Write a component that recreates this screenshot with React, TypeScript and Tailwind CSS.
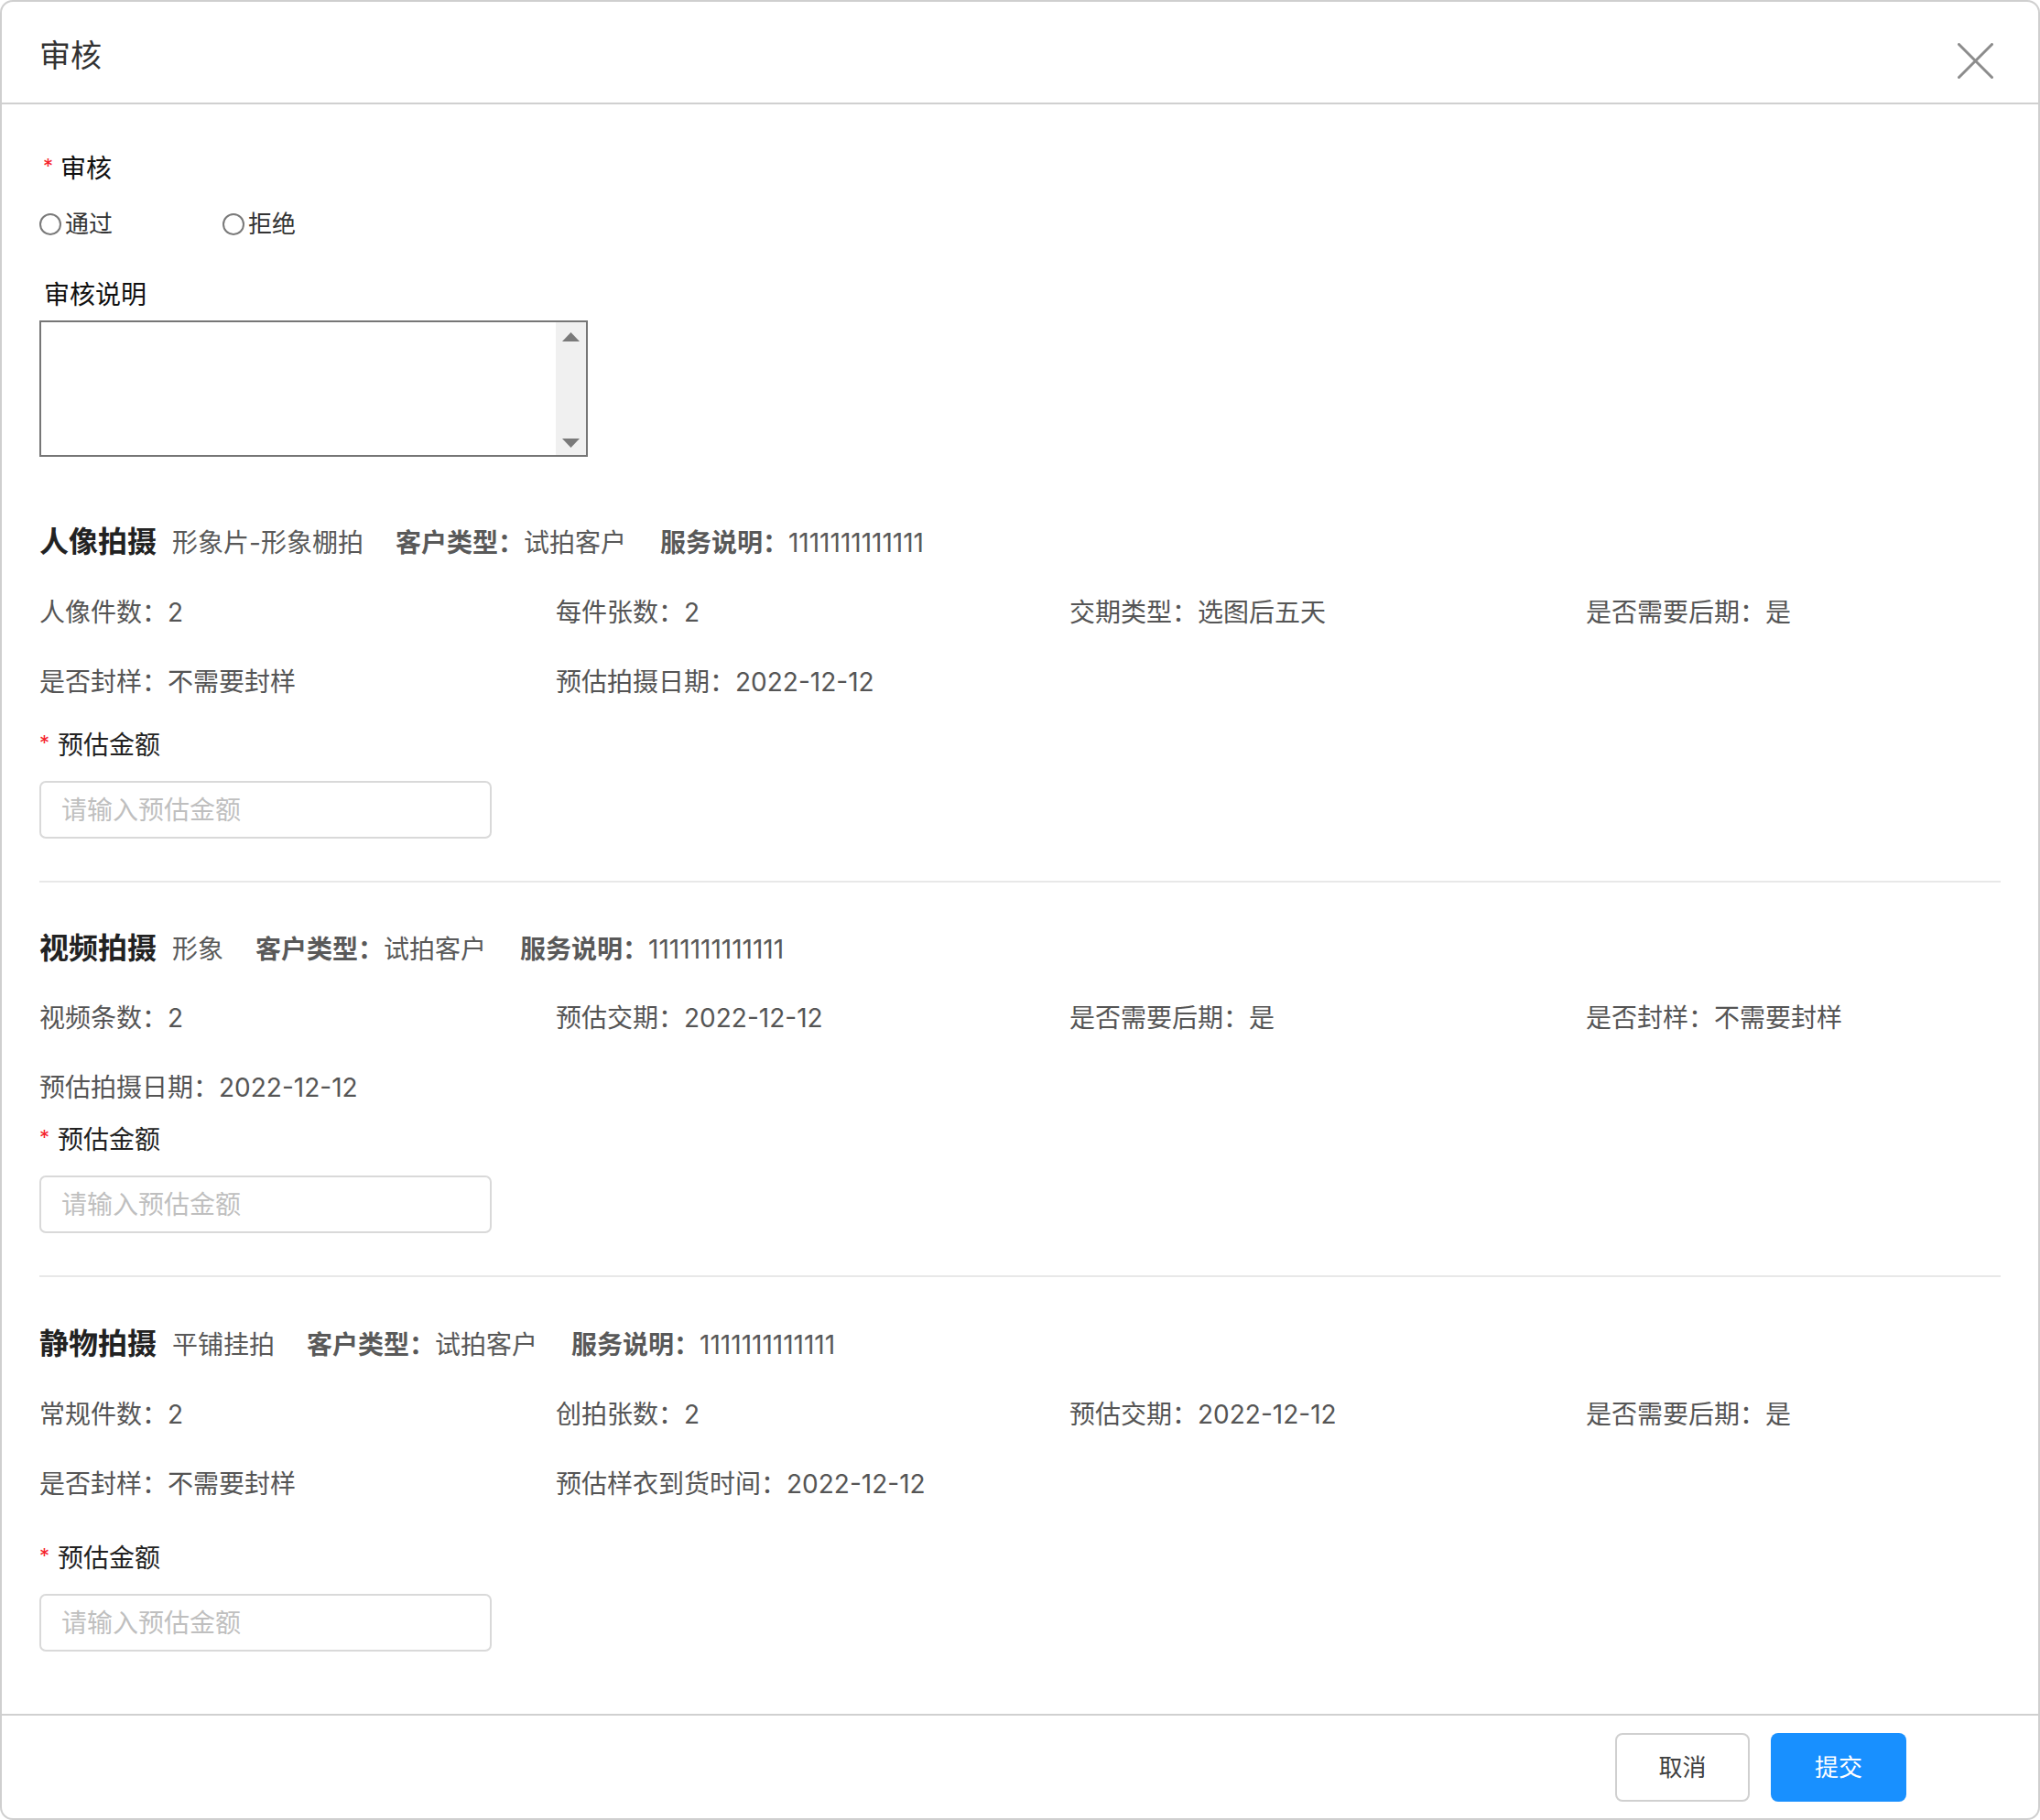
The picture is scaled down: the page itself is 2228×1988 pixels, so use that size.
import React from "react";

type Row = [string, string][];
type Section = {
  title: string;
  sub: string;
  customer: string;
  service: string;
  rows: Row[];
  titleMt: string;
  rowsMt: string;
  labelMt: string;
  inputMt: string;
  divider: boolean;
};

const sections: Section[] = [
  {
    title: "人像拍摄",
    sub: "形象片-形象棚拍",
    customer: "试拍客户",
    service: "1111111111111",
    rows: [
      [
        ["人像件数", "2"],
        ["每件张数", "2"],
        ["交期类型", "选图后五天"],
        ["是否需要后期", "是"],
      ],
      [
        ["是否封样", "不需要封样"],
        ["预估拍摄日期", "2022-12-12"],
      ],
    ],
    titleMt: "mt-[77px]",
    rowsMt: "mt-[47px]",
    labelMt: "mt-[41px]",
    inputMt: "mt-[25px]",
    divider: true,
  },
  {
    title: "视频拍摄",
    sub: "形象",
    customer: "试拍客户",
    service: "1111111111111",
    rows: [
      [
        ["视频条数", "2"],
        ["预估交期", "2022-12-12"],
        ["是否需要后期", "是"],
        ["是否封样", "不需要封样"],
      ],
      [["预估拍摄日期", "2022-12-12"]],
    ],
    titleMt: "mt-[56px]",
    rowsMt: "mt-[46px]",
    labelMt: "mt-[29px]",
    inputMt: "mt-[25px]",
    divider: true,
  },
  {
    title: "静物拍摄",
    sub: "平铺挂拍",
    customer: "试拍客户",
    service: "1111111111111",
    rows: [
      [
        ["常规件数", "2"],
        ["创拍张数", "2"],
        ["预估交期", "2022-12-12"],
        ["是否需要后期", "是"],
      ],
      [
        ["是否封样", "不需要封样"],
        ["预估样衣到货时间", "2022-12-12"],
      ],
    ],
    titleMt: "mt-[57px]",
    rowsMt: "mt-[47px]",
    labelMt: "mt-[53px]",
    inputMt: "mt-[25px]",
    divider: false,
  },
];

function Radio({ label }: { label: string }) {
  return (
    <label className="flex items-center gap-[4px] text-[26px] leading-[26px] text-[#333]">
      <span className="w-[24px] h-[24px] rounded-full border-2 border-[#7a7a7a] bg-white box-border" />
      <span>{label}</span>
    </label>
  );
}

function SectionBlock({ s }: { s: Section }) {
  return (
    <div>
      <div className={`${s.titleMt} flex items-baseline whitespace-nowrap`}>
        <span className="text-[32px] leading-[32px] font-bold text-[#222]">{s.title}</span>
        <span className="ml-[17px] text-[28px] leading-[28px] text-[#595959]">{s.sub}</span>
        <span className="ml-[35px] text-[28px] leading-[28px] text-[#595959]">
          <span className="font-semibold">客户类型：</span>
          {s.customer}
        </span>
        <span className="ml-[37px] text-[28px] leading-[28px] text-[#595959]">
          <span className="font-semibold">服务说明：</span>
          {s.service}
        </span>
      </div>
      <div className={`${s.rowsMt} flex flex-col gap-y-[48px]`}>
        {s.rows.map((row, i) => (
          <div key={i} className="grid grid-cols-[564px_561px_564px_1fr] text-[28px] leading-[28px] text-[#555]">
            {row.map(([k, v]) => (
              <div key={k} className="whitespace-nowrap">
                {k}：{v}
              </div>
            ))}
          </div>
        ))}
      </div>
      <div className={`${s.labelMt} flex items-start text-[28px] leading-[28px] text-[#222]`}>
        <span className="text-[#f5222d] text-[22px] leading-[22px] w-[20px]">*</span>
        <span>预估金额</span>
      </div>
      <div className={s.inputMt}>
        <input
          placeholder="请输入预估金额"
          className="w-[494px] h-[63px] box-border border-2 border-[#d9d9d9] rounded-[7px] pl-[22px] text-[28px] text-[#333] placeholder:text-[#bfbfbf] outline-none"
        />
      </div>
      {s.divider && <div className="mt-[46px] h-[2px] bg-[#e8e8e8]" />}
    </div>
  );
}

export default function App() {
  return (
    <div className="w-[2228px] h-[1988px] bg-white font-[Inter,'Noto_Sans_CJK_SC',sans-serif]">
      <div className="h-full box-border flex flex-col border-2 border-[#cfcfcf] rounded-[14px] overflow-hidden">
        {/* header */}
        <div className="h-[112px] shrink-0 box-border border-b-2 border-[#d0d0d0] flex justify-between items-start pl-[41px] pr-[49px]">
          <div className="mt-[42px] text-[34px] leading-[34px] text-[#333]">审核</div>
          <svg className="mt-[45px]" width="39" height="39" viewBox="0 0 39 39" fill="none">
            <path d="M1.5 1.5L37.5 37.5M37.5 1.5L1.5 37.5" stroke="#8c8c8c" strokeWidth="3" strokeLinecap="round" />
          </svg>
        </div>

        {/* body */}
        <div className="flex-1 px-[41px] pt-[56px]">
          <div className="flex items-start pl-[4px] text-[28px] leading-[28px] text-[#111]">
            <span className="text-[#f5222d] text-[22px] leading-[22px] w-[19px]">*</span>
            <span>审核</span>
          </div>
          <div className="mt-[34px] flex">
            <div className="w-[200px]">
              <Radio label="通过" />
            </div>
            <Radio label="拒绝" />
          </div>
          <div className="mt-[50px] pl-[5px] text-[28px] leading-[28px] text-[#111]">审核说明</div>
          <div className="mt-[14px] w-[599px] h-[149px] box-border border-2 border-[#767676] flex">
            <textarea className="flex-1 resize-none outline-none border-0 p-[4px] text-[26px]" />
            <div className="w-[33px] bg-[#f0f0f0] flex flex-col items-center justify-between pt-[11px] pb-[8px]">
              <svg width="19" height="10" viewBox="0 0 19 10">
                <path d="M9.5 0L19 10H0Z" fill="#7a7a7a" />
              </svg>
              <svg width="19" height="10" viewBox="0 0 19 10">
                <path d="M0 0H19L9.5 10Z" fill="#7a7a7a" />
              </svg>
            </div>
          </div>

          {sections.map((s) => (
            <SectionBlock key={s.title} s={s} />
          ))}
        </div>

        {/* footer */}
        <div className="h-[114px] shrink-0 box-border border-t-2 border-[#d0d0d0] flex items-center justify-end gap-[23px] pr-[144px]">
          <button className="w-[147px] h-[75px] box-border border-2 border-[#d0d0d0] rounded-[8px] bg-white text-[26px] text-[#404040]">
            取消
          </button>
          <button className="w-[148px] h-[75px] rounded-[8px] bg-[#1890ff] text-[26px] text-white">提交</button>
        </div>
      </div>
    </div>
  );
}
